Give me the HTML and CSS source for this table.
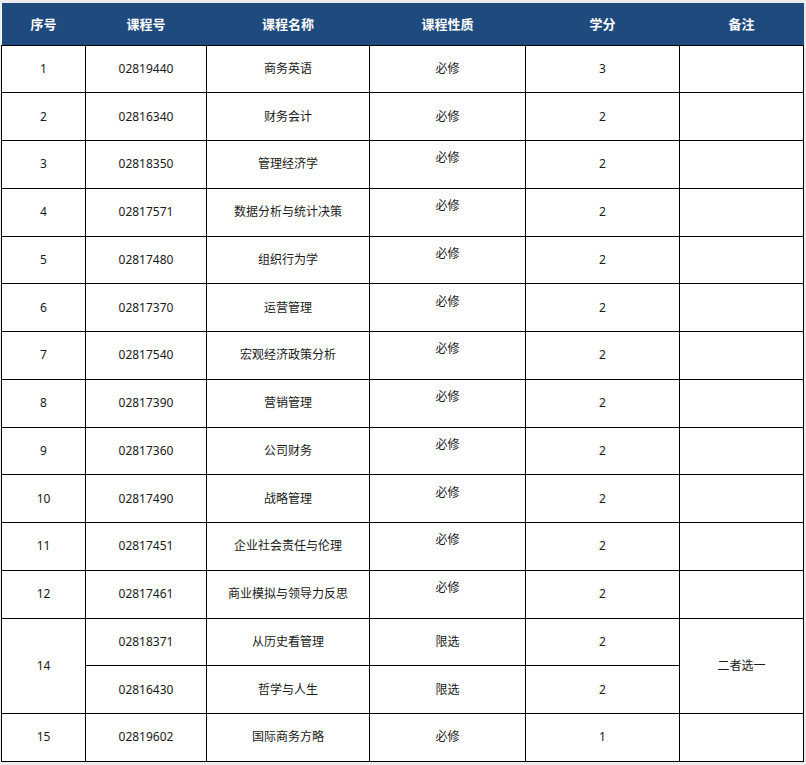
FILE: index.html
```html
<!DOCTYPE html>
<html lang="zh-CN">
<head>
<meta charset="utf-8">
<title>课程表</title>
<link rel="stylesheet" href="styles.css">
</head>
<body>
<table class="course-table">
  <colgroup>
    <col class="c1"><col class="c2"><col class="c3"><col class="c4"><col class="c5"><col class="c6">
  </colgroup>
  <thead>
    <tr class="head"><th>序号</th><th>课程号</th><th>课程名称</th><th>课程性质</th><th>学分</th><th>备注</th></tr>
  </thead>
  <tbody>
    <tr><td>1</td><td>02819440</td><td>商务英语</td><td>必修</td><td>3</td><td></td></tr>
    <tr><td>2</td><td>02816340</td><td>财务会计</td><td>必修</td><td>2</td><td></td></tr>
    <tr><td>3</td><td>02818350</td><td>管理经济学</td><td class="hi">必修</td><td>2</td><td></td></tr>
    <tr><td>4</td><td>02817571</td><td>数据分析与统计决策</td><td class="hi">必修</td><td>2</td><td></td></tr>
    <tr><td>5</td><td>02817480</td><td>组织行为学</td><td class="hi">必修</td><td>2</td><td></td></tr>
    <tr><td>6</td><td>02817370</td><td>运营管理</td><td class="hi">必修</td><td>2</td><td></td></tr>
    <tr><td>7</td><td>02817540</td><td>宏观经济政策分析</td><td class="hi">必修</td><td>2</td><td></td></tr>
    <tr><td>8</td><td>02817390</td><td>营销管理</td><td class="hi">必修</td><td>2</td><td></td></tr>
    <tr><td>9</td><td>02817360</td><td>公司财务</td><td class="hi">必修</td><td>2</td><td></td></tr>
    <tr><td>10</td><td>02817490</td><td>战略管理</td><td class="hi">必修</td><td>2</td><td></td></tr>
    <tr><td>11</td><td>02817451</td><td>企业社会责任与伦理</td><td class="hi">必修</td><td>2</td><td></td></tr>
    <tr><td>12</td><td>02817461</td><td>商业模拟与领导力反思</td><td class="hi">必修</td><td>2</td><td></td></tr>
    <tr><td rowspan="2">14</td><td>02818371</td><td>从历史看管理</td><td>限选</td><td>2</td><td rowspan="2">二者选一</td></tr>
    <tr><td>02816430</td><td>哲学与人生</td><td>限选</td><td>2</td></tr>
    <tr><td>15</td><td>02819602</td><td>国际商务方略</td><td>必修</td><td>1</td><td></td></tr>
  </tbody>
</table>
</body>
</html>
```
FILE: styles.css
```css
html, body {
  margin: 0;
  padding: 0;
  background: #ececec;
}
body {
  padding: 3px 0 0 1px;
  font-family: "Noto Sans", "Noto Sans CJK SC", sans-serif;
}
.course-table {
  border-collapse: collapse;
  table-layout: fixed;
  width: 802px;
  background: #ffffff;
}
.c1 { width: 84px; }
.c2 { width: 121px; }
.c3 { width: 163px; }
.c4 { width: 156px; }
.c5 { width: 154px; }
.c6 { width: 124px; }
.course-table tr {
  height: 47.75px;
}
.course-table tr.head {
  height: 42px;
}
.course-table th {
  background: #1f4a7e;
  color: #ffffff;
  font-size: 13px;
  font-weight: bold;
  padding: 0;
  text-align: center;
  vertical-align: middle;
  border: none;
  border-bottom: 1px solid #000;
}
.course-table td {
  border: 1px solid #000;
  padding: 0;
  text-align: center;
  vertical-align: middle;
  font-size: 12px;
  line-height: 16px;
  color: #1a1a1a;
}
.course-table td.hi {
  padding-bottom: 12px;
}
```
